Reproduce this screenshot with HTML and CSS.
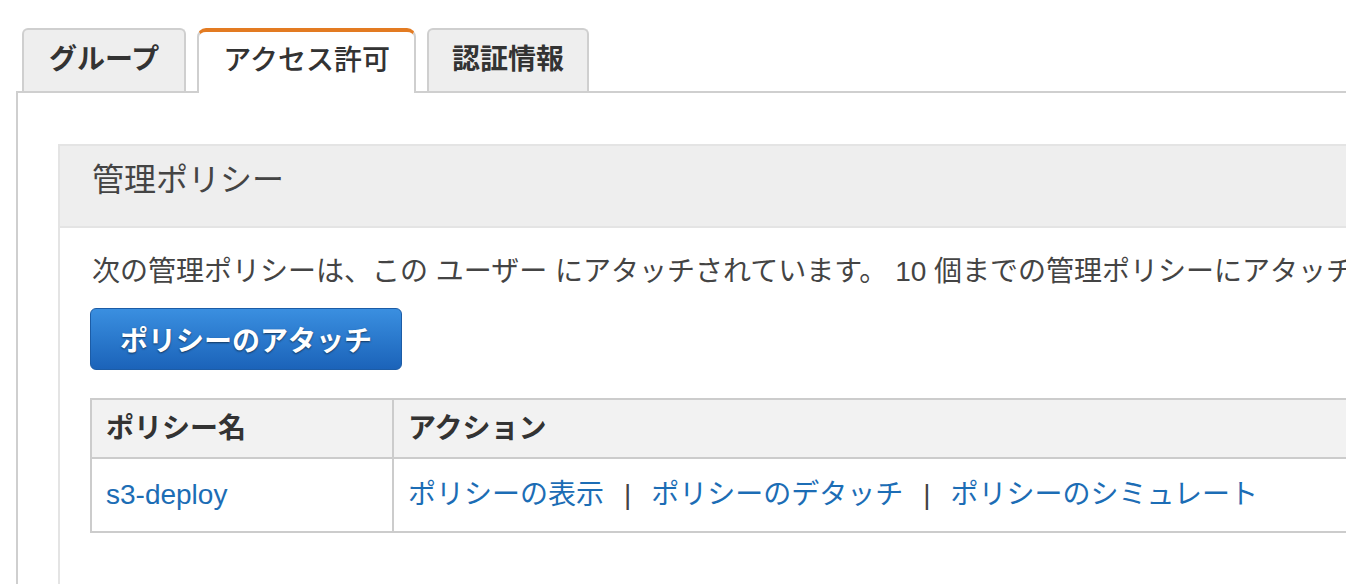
FILE: index.html
```html
<!DOCTYPE html>
<html lang="ja">
<head>
<meta charset="utf-8">
<title>アクセス許可</title>
<link rel="stylesheet" href="styles.css">
</head>
<body>
<div class="page">
  <div class="tabs">
    <div class="tab">グループ</div>
    <div class="tab active">アクセス許可</div>
    <div class="tab tab-narrow">認証情報</div>
  </div>
  <div class="tab-body">
    <div class="panel">
      <div class="panel-head">管理ポリシー</div>
      <div class="panel-body">
        <p class="desc">次の管理ポリシーは、この ユーザー にアタッチされています。 10 個までの管理ポリシーにアタッチできます。</p>
        <button class="btn-primary">ポリシーのアタッチ</button>
        <table class="policies">
          <thead>
            <tr><th class="col-name">ポリシー名</th><th>アクション</th></tr>
          </thead>
          <tbody>
            <tr>
              <td class="col-name"><a href="#">s3-deploy</a></td>
              <td><a href="#">ポリシーの表示</a><span class="sep">|</span><a href="#">ポリシーのデタッチ</a><span class="sep">|</span><a href="#">ポリシーのシミュレート</a></td>
            </tr>
          </tbody>
        </table>
      </div>
    </div>
  </div>
</div>
</body>
</html>
```

FILE: styles.css
```css
html, body {
  margin: 0;
  padding: 0;
  overflow: hidden;
  background: #fff;
}
body {
  font-family: "Liberation Sans", "Noto Sans CJK JP", sans-serif;
  font-size: 28px;
  color: #444;
}
.page {
  padding-top: 28px;
  width: 1700px;
}
.tabs {
  display: flex;
  align-items: flex-start;
  gap: 11px;
  margin-left: 22px;
  height: 65px;
  margin-bottom: -2px;
}
.tab {
  box-sizing: border-box;
  height: 63px;
  padding: 0 25px;
  border: 2px solid #cfcfcf;
  border-bottom: none;
  border-radius: 6px 6px 0 0;
  background: #eee;
  color: #333;
  font-weight: bold;
  line-height: 60px;
}
.tab.tab-narrow {
  padding: 0 23px;
}
.tab.active {
  position: relative;
  z-index: 1;
  height: 65px;
  padding: 0 24px;
  background: #fff;
  border-top: 4px solid #e37b22;
  border-radius: 9px 9px 0 0;
  font-weight: 500;
  line-height: 58px;
}
.tab-body {
  margin-left: 16px;
  border-top: 2px solid #cfcfcf;
  border-left: 2px solid #cfcfcf;
  padding: 51px 0 0 40px;
  height: 600px;
}
.panel {
  border: 2px solid #e4e4e4;
  height: 600px;
}
.panel-head {
  background: #eee;
  border-bottom: 2px solid #e4e4e4;
  height: 82px;
  box-sizing: border-box;
  padding: 12px 0 0 32px;
  font-size: 32px;
  line-height: 44px;
  color: #444;
}
.panel-body {
  padding: 24px 0 0 30px;
}
.desc {
  margin: 0;
  line-height: 40px;
  white-space: nowrap;
  padding-left: 2px;
}
.btn-primary {
  display: block;
  margin-top: 16px;
  box-sizing: border-box;
  width: 312px;
  height: 62px;
  padding: 0;
  border: 1px solid #1c5ca6;
  border-radius: 6px;
  background: linear-gradient(#3a8fe0, #1b63b9);
  color: #fff;
  font-family: inherit;
  font-size: 28px;
  font-weight: bold;
  text-shadow: 0 1px 2px rgba(0, 0, 0, 0.55);
  cursor: pointer;
}
.policies {
  margin-top: 28px;
  border-collapse: collapse;
  width: 1500px;
}
.policies th,
.policies td {
  border: 2px solid #cccccc;
  text-align: left;
  padding: 0 14px;
  white-space: nowrap;
}
.policies th {
  background: #f2f2f2;
  color: #333;
  font-weight: bold;
  height: 57px;
  line-height: 40px;
}
.policies td {
  height: 72px;
  line-height: 40px;
}
.policies .col-name {
  width: 272px;
}
.policies a {
  color: #1c6db5;
  text-decoration: none;
}
.sep {
  margin: 0 20px;
  color: #444;
}
```
